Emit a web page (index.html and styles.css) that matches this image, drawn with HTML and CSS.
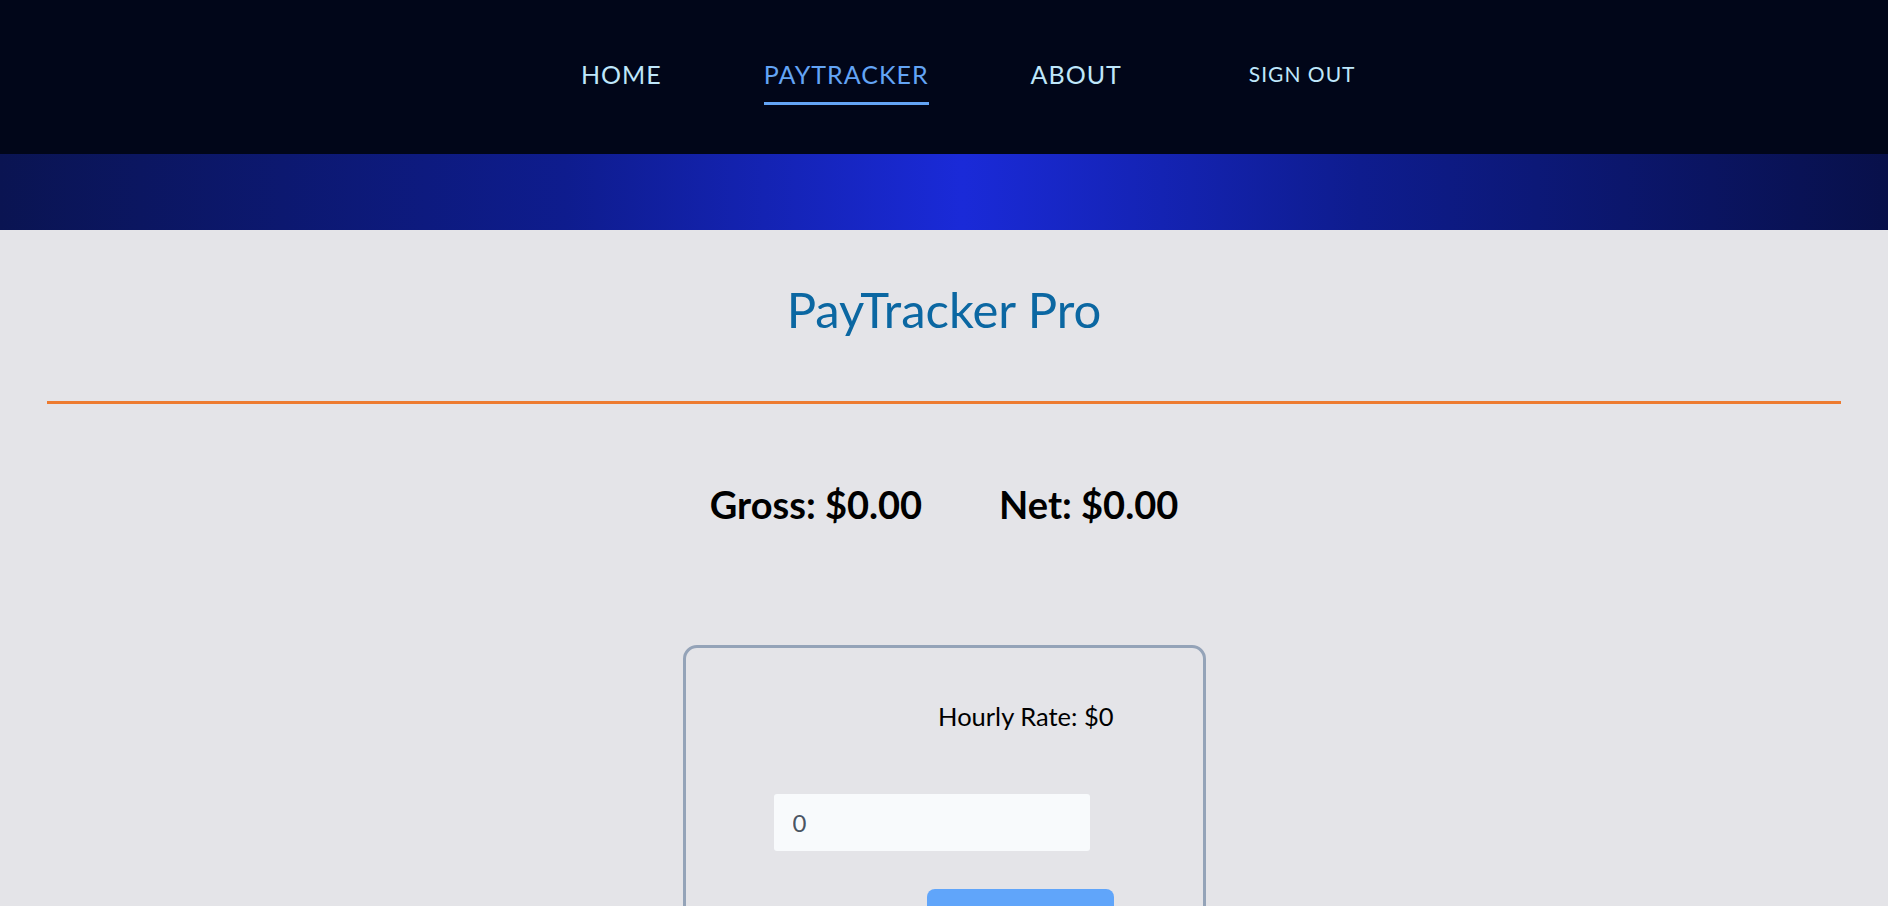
FILE: index.html
```html
<!DOCTYPE html>
<html lang="en">
<head>
<meta charset="utf-8">
<title>PayTracker Pro</title>
<link rel="stylesheet" href="styles.css">
</head>
<body>
<nav class="topnav">
  <a class="nav-link" href="#">HOME</a>
  <a class="nav-link active" href="#">PAYTRACKER</a>
  <a class="nav-link" href="#">ABOUT</a>
  <a class="nav-link signout" href="#">SIGN OUT</a>
</nav>
<div class="banner"></div>
<main class="content">
  <h1 class="title">PayTracker Pro</h1>
  <hr class="divider">
  <div class="totals">
    <span class="total">Gross: $0.00</span>
    <span class="total">Net: $0.00</span>
  </div>
  <section class="card">
    <div class="rate">Hourly Rate: $0</div>
    <input class="rate-input" type="text" value="0">
    <div class="actions"><button class="btn">Set Rate</button></div>
  </section>
</main>
</body>
</html>
```
FILE: styles.css
```css
html, body {
  margin: 0;
  padding: 0;
}
body {
  background: #e4e4e8;
  font-family: Lato, "Open Sans", sans-serif;
  color: #000;
}
.topnav {
  height: 154px;
  background: #010619;
  display: flex;
  align-items: flex-start;
  padding-left: 581px;
  box-sizing: border-box;
}
.nav-link {
  color: #bfe7fb;
  text-decoration: none;
  font-size: 25px;
  letter-spacing: 1px;
  line-height: 30px;
  margin-top: 59px;
  margin-right: 102px;
  padding-bottom: 13px;
  border-bottom: 3px solid transparent;
}
.nav-link.active {
  color: #63a4f5;
  border-bottom-color: #63a4f5;
}
.nav-link.signout {
  font-size: 21px;
  margin-left: 25px;
}
.banner {
  height: 76px;
  background: linear-gradient(to right, #0a1452 0%, #0e1c8e 30%, #1a2ad8 51%, #0e1c8e 72%, #08104a 100%);
}
.content {
  padding: 50px 47px 0;
}
.title {
  margin: 0;
  text-align: center;
  font-weight: 400;
  font-size: 49px;
  line-height: 58px;
  color: #0b67a2;
}
.divider {
  margin: 63px 0 0;
  border: 0;
  height: 3px;
  background: #ed7b30;
}
.totals {
  margin-top: 78px;
  display: flex;
  justify-content: center;
  gap: 77px;
  font-size: 38px;
  font-weight: 700;
  line-height: 45px;
}
.card {
  width: 523px;
  box-sizing: border-box;
  margin: 118px auto 0;
  border: 3px solid #94a3b8;
  border-radius: 14px;
  padding: 54px 89px 0 88px;
  height: 320px;
}
.rate {
  text-align: right;
  font-size: 25.5px;
  line-height: 29px;
}
.rate-input {
  display: block;
  margin-top: 63px;
  width: 316px;
  height: 57px;
  box-sizing: border-box;
  border: 0;
  border-radius: 3px;
  background: #f8fafc;
  padding: 0 0 0 19px;
  font-family: Lato, "Open Sans", sans-serif;
  font-size: 24px;
  color: #4b5563;
  outline: none;
}
.actions {
  display: flex;
  justify-content: flex-end;
  margin-top: 38px;
}
.btn {
  width: 187px;
  height: 76px;
  border: 0;
  border-radius: 8px;
  background: #60a5fa;
  color: #fff;
  font-family: Lato, "Open Sans", sans-serif;
  font-size: 22px;
}
```
